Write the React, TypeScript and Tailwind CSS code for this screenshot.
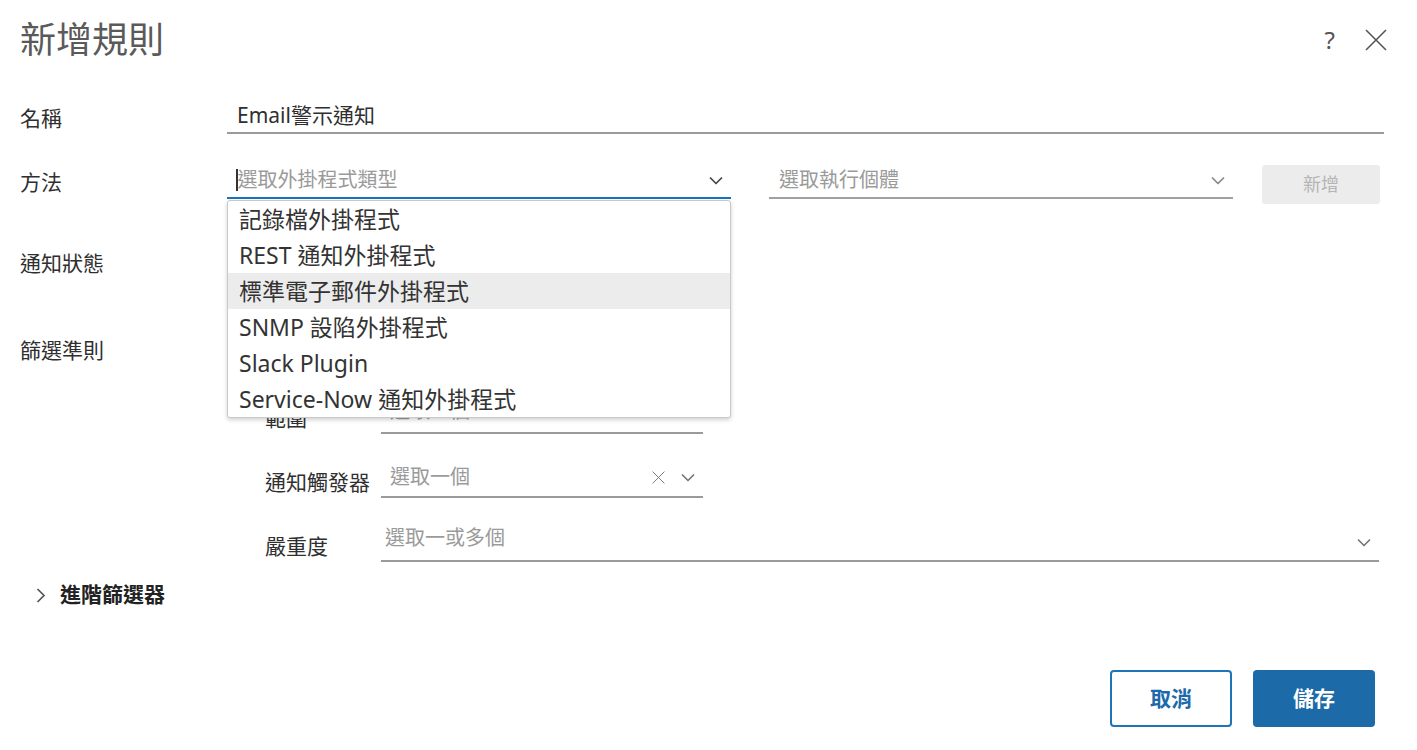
import React from 'react';

const FONT = 'font-["Noto_Sans","Noto_Sans_CJK_TC",sans-serif]';

function Chevron({ className = '' }: { className?: string }) {
  return (
    <svg width="14" height="9" viewBox="0 0 14 9" className={className} fill="none">
      <polyline points="1,1.5 7,7.5 13,1.5" stroke="currentColor" strokeWidth="1.7" strokeLinejoin="round" />
    </svg>
  );
}

function Cross({ size = 22, className = '' }: { size?: number; className?: string }) {
  return (
    <svg width={size} height={size} viewBox="0 0 22 22" className={className} fill="none">
      <path d="M1 1 L21 21 M21 1 L1 21" stroke="currentColor" strokeWidth="1.6" />
    </svg>
  );
}

const plugins = [
  '記錄檔外掛程式',
  'REST 通知外掛程式',
  '標準電子郵件外掛程式',
  'SNMP 設陷外掛程式',
  'Slack Plugin',
  'Service-Now 通知外掛程式',
];

function SubRow({ label, first, children }: { label: string; first?: boolean; children: React.ReactNode }) {
  return (
    <div className={`flex items-end h-[40px] ml-[245px] ${first ? 'mt-[29px]' : 'mt-[24px]'}`}>
      <div className="w-[116px] h-[30px] flex items-center text-[21px] text-[#2f2f2f]">{label}</div>
      {children}
    </div>
  );
}

export default function App() {
  return (
    <div className={`w-[1417px] h-[750px] bg-white pl-5 pr-[33px] ${FONT}`}>
      {/* Header */}
      <div className="h-[80px] flex items-center justify-between">
        <h1 className="text-[36px] leading-none font-normal text-[#5a5a5a]">新增規則</h1>
        <div className="flex items-center gap-[30px] mr-[-3px] text-[#555]">
          <span className="text-[24px] leading-none">?</span>
          <Cross size={22} />
        </div>
      </div>

      {/* Name */}
      <div className="flex items-center h-[34px] mt-[20px]">
        <div className="w-[207px] pt-1 text-[21px] text-[#2f2f2f]">名稱</div>
        <div className="flex-1 h-full flex items-center border-b-2 border-[#9a9a9a] pl-[10px] text-[21px] text-[#2f2f2f]">
          Email警示通知
        </div>
      </div>

      {/* Method */}
      <div className="flex h-[36px] mt-[29px]">
        <div className="w-[207px] flex items-center pt-1 text-[21px] text-[#2f2f2f]">方法</div>
        <div className="relative w-[504px] h-full flex items-center border-b-2 border-[#1a73b8] pl-[9px] pr-[8px]">
          <span className="w-[1.5px] h-[22px] bg-[#333]" />
          <span className="flex-1 text-[20px] text-[#9a9a9a]">選取外掛程式類型</span>
          <Chevron className="text-[#444]" />
          <div className="absolute left-0 top-[calc(100%+3px)] w-[504px] bg-white border border-[#c9c9c9] rounded-[3px] shadow-[0_2px_4px_rgba(0,0,0,0.18)] z-10">
            {plugins.map((p, i) => (
              <div
                key={p}
                className={`h-[36px] flex items-center px-[11px] text-[23px] text-[#333] ${i === 2 ? 'bg-[#ececec]' : ''}`}
              >
                {p}
              </div>
            ))}
          </div>
        </div>
        <div className="w-[464px] ml-[38px] h-full flex items-center border-b-2 border-[#a0a0a0] pl-[10px] pr-[8px]">
          <span className="flex-1 text-[20px] text-[#9a9a9a]">選取執行個體</span>
          <Chevron className="text-[#888]" />
        </div>
        <button className="ml-[29px] mt-[2px] w-[118px] h-[39px] rounded-[3px] bg-[#ececec] text-[18px] text-[#b5b5b5]">
          新增
        </button>
      </div>

      {/* Notification state */}
      <div className="h-[28px] mt-[51px] flex items-center text-[21px] text-[#2f2f2f]">通知狀態</div>

      {/* Filter criteria */}
      <div className="h-[28px] mt-[59px] flex items-center text-[21px] text-[#2f2f2f]">篩選準則</div>

      <SubRow label="範圍" first>
        <div className="w-[322px] h-full flex items-center pb-[4px] border-b-2 border-[#9a9a9a] pl-[9px] text-[20px] text-[#9a9a9a]">
          選取一個
        </div>
      </SubRow>

      <SubRow label="通知觸發器">
        <div className="w-[322px] h-full flex items-center border-b-2 border-[#9a9a9a] pl-[9px] pr-[8px]">
          <span className="flex-1 text-[20px] text-[#9a9a9a]">選取一個</span>
          <Cross size={13} className="text-[#777] mr-[16px]" />
          <Chevron className="text-[#777]" />
        </div>
      </SubRow>

      <SubRow label="嚴重度">
        <div className="flex-1 mr-[5px] h-full flex items-center pb-[6px] border-b-2 border-[#9a9a9a] pl-[4px] pr-[8px]">
          <span className="flex-1 text-[20px] text-[#9a9a9a]">選取一或多個</span>
          <Chevron className="text-[#777] mt-[8px]" />
        </div>
      </SubRow>

      {/* Advanced filter */}
      <div className="h-[26px] mt-[20px] flex items-center">
        <svg width="10" height="15" viewBox="0 0 10 15" className="ml-[16px] text-[#555]" fill="none">
          <polyline points="1.5,1 8,7.5 1.5,14" stroke="currentColor" strokeWidth="1.7" />
        </svg>
        <span className="ml-[14px] text-[21px] font-bold text-[#222]">進階篩選器</span>
      </div>

      {/* Footer */}
      <div className="flex justify-end gap-[21px] mt-[62px] mr-[9px]">
        <button className="w-[122px] h-[57px] rounded-[4px] border-2 border-[#1c74b9] text-[21px] font-semibold text-[#1c6aab] bg-white">
          取消
        </button>
        <button className="w-[122px] h-[57px] rounded-[4px] bg-[#1d6aa8] text-[21px] font-semibold text-white">
          儲存
        </button>
      </div>
    </div>
  );
}
